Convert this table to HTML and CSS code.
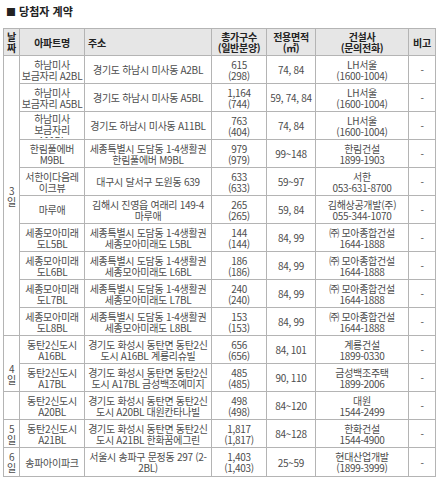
FILE: index.html
```html
<!DOCTYPE html>
<html lang="ko">
<head>
<meta charset="utf-8">
<link rel="stylesheet" href="styles.css">
</head>
<body>
<div class="page">
  <h2 class="title"><span class="sq">■</span> 당첨자 계약</h2>
  <table class="grid">
    <colgroup>
      <col class="c-date"><col class="c-name"><col class="c-addr"><col class="c-units"><col class="c-area"><col class="c-builder"><col class="c-note">
    </colgroup>
    <thead>
      <tr>
        <th>날<br>짜</th>
        <th>아파트명</th>
        <th class="left">주소</th>
        <th>총가구수<br>(일반분양)</th>
        <th>전용면적<br>(㎡)</th>
        <th>건설사<br>(문의전화)</th>
        <th>비고</th>
      </tr>
    </thead>
    <tbody>
      <tr>
        <td class="date" rowspan="10">3<br>일</td>
        <td>하남미사<br>보금자리 A2BL</td>
        <td>경기도 하남시 미사동 A2BL</td>
        <td>615<br>(298)</td>
        <td>74, 84</td>
        <td>LH서울<br>(1600-1004)</td>
        <td>-</td>
      </tr>
      <tr>
        <td>하남미사<br>보금자리 A5BL</td>
        <td>경기도 하남시 미사동 A5BL</td>
        <td>1,164<br>(744)</td>
        <td>59, 74, 84</td>
        <td>LH서울<br>(1600-1004)</td>
        <td>-</td>
      </tr>
      <tr>
        <td><div class="clip">하남미사<br>보금자리<br>A11BL</div></td>
        <td>경기도 하남시 미사동 A11BL</td>
        <td>763<br>(404)</td>
        <td>74, 84</td>
        <td>LH서울<br>(1600-1004)</td>
        <td>-</td>
      </tr>
      <tr>
        <td>한림풀에버<br>M9BL</td>
        <td>세종특별시 도담동 1-4생활권<br>한림풀에버 M9BL</td>
        <td>979<br>(979)</td>
        <td>99~148</td>
        <td>한림건설<br>1899-1903</td>
        <td>-</td>
      </tr>
      <tr>
        <td>서한이다음레<br>이크뷰</td>
        <td>대구시 달서구 도원동 639</td>
        <td>633<br>(633)</td>
        <td>59~97</td>
        <td>서한<br>053-631-8700</td>
        <td>-</td>
      </tr>
      <tr>
        <td>마루애</td>
        <td>김해시 진영읍 여래리 149-4<br>마루애</td>
        <td>265<br>(265)</td>
        <td>59, 84</td>
        <td>김해상공개발(주)<br>055-344-1070</td>
        <td>-</td>
      </tr>
      <tr>
        <td>세종모아미래<br>도L5BL</td>
        <td>세종특별시 도담동 1-4생활권<br>세종모아미래도 L5BL</td>
        <td>144<br>(144)</td>
        <td>84, 99</td>
        <td>㈜ 모아종합건설<br>1644-1888</td>
        <td>-</td>
      </tr>
      <tr>
        <td>세종모아미래<br>도L6BL</td>
        <td>세종특별시 도담동 1-4생활권<br>세종모아미래도 L6BL</td>
        <td>186<br>(186)</td>
        <td>84, 99</td>
        <td>㈜ 모아종합건설<br>1644-1888</td>
        <td>-</td>
      </tr>
      <tr>
        <td>세종모아미래<br>도L7BL</td>
        <td>세종특별시 도담동 1-4생활권<br>세종모아미래도 L7BL</td>
        <td>240<br>(240)</td>
        <td>84, 99</td>
        <td>㈜ 모아종합건설<br>1644-1888</td>
        <td>-</td>
      </tr>
      <tr>
        <td>세종모아미래<br>도L8BL</td>
        <td>세종특별시 도담동 1-4생활권<br>세종모아미래도 L8BL</td>
        <td>153<br>(153)</td>
        <td>84, 99</td>
        <td>㈜ 모아종합건설<br>1644-1888</td>
        <td>-</td>
      </tr>
      <tr>
        <td class="date bottom" rowspan="2">4<br>일</td>
        <td>동탄2신도시<br>A16BL</td>
        <td>경기도 화성시 동탄면 동탄2신<br>도시 A16BL 계룡리슈빌</td>
        <td>656<br>(656)</td>
        <td>84, 101</td>
        <td>계룡건설<br>1899-0330</td>
        <td>-</td>
      </tr>
      <tr class="dotted">
        <td>동탄2신도시<br>A17BL</td>
        <td>경기도 화성시 동탄면 동탄2신<br>도시 A17BL 금성백조예미지</td>
        <td>485<br>(485)</td>
        <td>90, 110</td>
        <td>금성백조주택<br>1899-2006</td>
        <td>-</td>
      </tr>
      <tr>
        <td class="date"></td>
        <td>동탄2신도시<br>A20BL</td>
        <td>경기도 화성시 동탄면 동탄2신<br>도시 A20BL 대원칸타나빌</td>
        <td>498<br>(498)</td>
        <td>84~120</td>
        <td>대원<br>1544-2499</td>
        <td>-</td>
      </tr>
      <tr>
        <td class="date">5<br>일</td>
        <td>동탄2신도시<br>A21BL</td>
        <td>경기도 화성시 동탄면 동탄2신<br>도시 A21BL 한화꿈에그린</td>
        <td>1,817<br>(1,817)</td>
        <td>84~128</td>
        <td>한화건설<br>1544-4900</td>
        <td>-</td>
      </tr>
      <tr class="last">
        <td class="date">6<br>일</td>
        <td>송파아이파크</td>
        <td>서울시 송파구 문정동 297 (2-<br>2BL)</td>
        <td>1,403<br>(1,403)</td>
        <td>25~59</td>
        <td>현대산업개발<br>(1899-3999)</td>
        <td>-</td>
      </tr>
    </tbody>
  </table>
</div>
</body>
</html>
```

FILE: styles.css
```css
html, body {
  margin: 0;
  padding: 0;
  background: #ffffff;
}

.page {
  padding: 0 0 0 3px;
  font-family: "Noto Sans CJK KR", "Noto Sans", sans-serif;
  color: #4d4d4d;
}

.title {
  margin: 0;
  padding: 5px 0 0 3px;
  height: 28px;
  box-sizing: border-box;
  font-size: 11px;
  line-height: 12px;
  font-weight: bold;
  color: #222222;
}

.sq {
  font-size: 10px;
}

.grid {
  border-collapse: collapse;
  table-layout: fixed;
  width: 432px;
  font-size: 10px;
  line-height: 11px;
  letter-spacing: -0.3px;
}

.c-date { width: 16px; }
.c-name { width: 65px; }
.c-addr { width: 127px; }
.c-units { width: 55px; }
.c-area { width: 49px; }
.c-builder { width: 93px; }
.c-note { width: 27px; }

.grid thead tr {
  height: 27px;
}

.grid tbody tr {
  height: 28px;
}

.grid tbody tr.last {
  height: 29px;
}

.grid th,
.grid td {
  border: 1px solid #b4b4b4;
  padding: 0 1px;
  text-align: center;
  vertical-align: middle;
  overflow: hidden;
  white-space: nowrap;
}

.grid th {
  background: #e6e6e6;
  color: #222222;
  font-weight: bold;
}

.grid th.left {
  text-align: left;
  padding-left: 3px;
}

.grid td.date {
  padding: 0;
}

.grid td.bottom {
  vertical-align: bottom;
  padding-bottom: 6px;
}

.clip {
  max-height: 25px;
  overflow: hidden;
}

.grid tr.dotted td {
  border-bottom: 1px dotted #888888;
}
```
